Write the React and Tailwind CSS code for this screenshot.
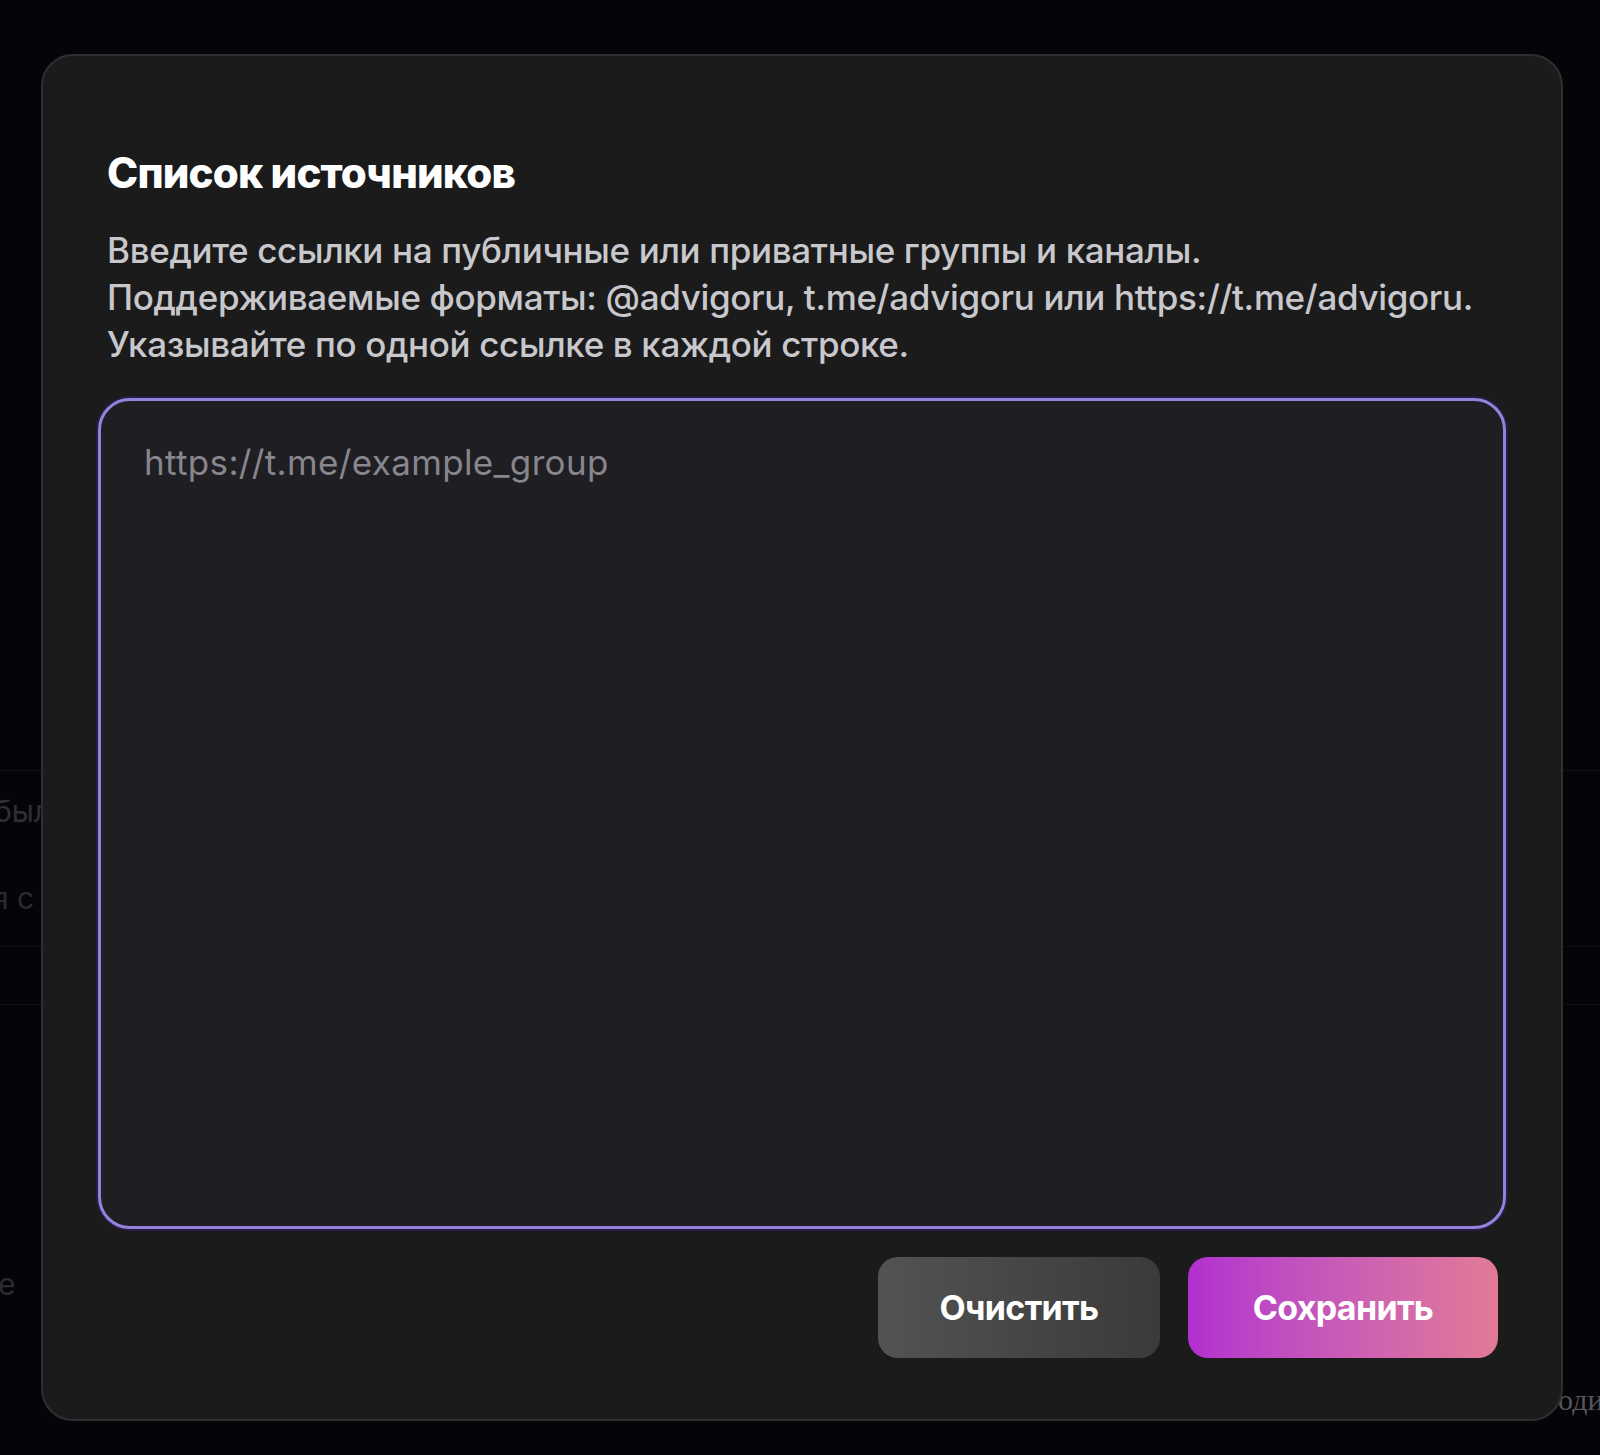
export default function App() {
  return (
    <div className="relative min-h-[1455px] w-full overflow-hidden bg-[#050408] font-['Inter',sans-serif]">
      {/* page behind the dialog, barely visible */}
      <div className="flex flex-col">
        <div className="h-[770px]" />
        <div className="border-t border-[#131317]">
          <div className="flex h-[80px] items-center text-[30px] text-[#2f2f35]">
            <span className="-ml-[6px] whitespace-nowrap">был</span>
          </div>
          <div className="flex h-[95px] items-center text-[30px] text-[#2b2b31]">
            <span className="-ml-[8px] whitespace-nowrap">я с</span>
          </div>
        </div>
        <div className="h-[58px] border-t border-[#111115]" />
        <div className="flex h-[303px] items-end border-t border-[#111115]">
          <span className="-ml-[2px] text-[30px] text-[#2c2c32]">е</span>
        </div>
        <div className="flex pt-[70px]">
          <span className="ml-[1558px] whitespace-nowrap font-['Liberation_Serif',serif] text-[30px] text-[#55555a]">одиночные</span>
        </div>
      </div>

      {/* dialog */}
      <div className="absolute inset-0 pl-[41px] pt-[54px]">
        <div className="w-[1522px] rounded-[32px] border-2 border-[#2e2e31] bg-[#1b1b1c] px-[55px] pb-[61px] pt-[93px]">
          <div className="px-[9px]">
            <h2 className="text-[42px] font-extrabold leading-[48px] tracking-[-0.02em] text-white">
              Список источников
            </h2>
            <p className="mt-[30px] text-[35px] font-medium leading-[47px] tracking-[-0.01em] text-[#c8c8cc]">
              Введите ссылки на публичные или приватные группы и каналы.
              <br />
              Поддерживаемые форматы: @advigoru, t.me/advigoru или https://t.me/advigoru.
              <br />
              Указывайте по одной ссылке в каждой строке.
            </p>
          </div>

          <textarea
            className="mt-[30px] block h-[831px] w-full resize-none rounded-[32px] border-[3px] border-[#9682dc] bg-[#1f1e23] px-[43px] py-[38px] text-[35px] leading-[46px] tracking-[0.01em] text-white shadow-[0_0_0_2px_#261d45] outline-none placeholder:text-[#86868c]"
            placeholder="https://t.me/example_group"
          />

          <div className="mt-[28px] flex justify-end gap-[28px] pr-[8px]">
            <button className="h-[101px] w-[282px] rounded-[20px] bg-gradient-to-r from-[#535353] to-[#3a3a3a] text-[34px] font-bold tracking-[-0.02em] text-white">
              Очистить
            </button>
            <button className="h-[101px] w-[310px] rounded-[20px] bg-gradient-to-r from-[#b22fd0] to-[#e27a96] text-[34px] font-bold tracking-[-0.02em] text-white">
              Сохранить
            </button>
          </div>
        </div>
      </div>
    </div>
  );
}
